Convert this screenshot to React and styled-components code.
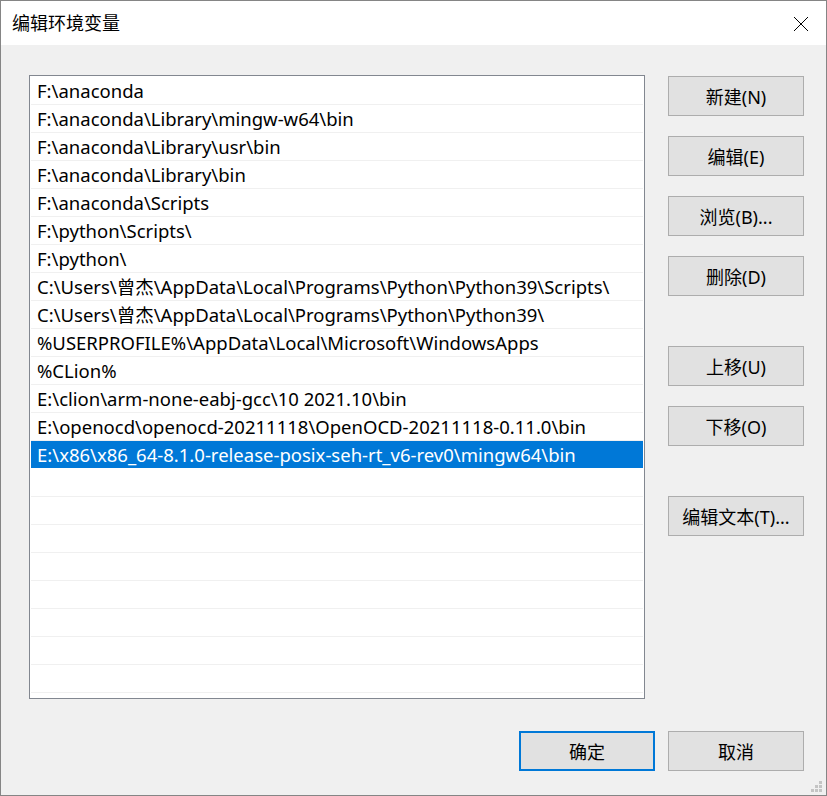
import React from 'react';
import styled, { createGlobalStyle } from 'styled-components';

const GlobalStyle = createGlobalStyle`
  html, body {
    margin: 0;
    padding: 0;
    background: #ffffff;
  }
  * {
    box-sizing: border-box;
  }
`;

const paths = [
  'F:\\anaconda',
  'F:\\anaconda\\Library\\mingw-w64\\bin',
  'F:\\anaconda\\Library\\usr\\bin',
  'F:\\anaconda\\Library\\bin',
  'F:\\anaconda\\Scripts',
  'F:\\python\\Scripts\\',
  'F:\\python\\',
  'C:\\Users\\曾杰\\AppData\\Local\\Programs\\Python\\Python39\\Scripts\\',
  'C:\\Users\\曾杰\\AppData\\Local\\Programs\\Python\\Python39\\',
  '%USERPROFILE%\\AppData\\Local\\Microsoft\\WindowsApps',
  '%CLion%',
  'E:\\clion\\arm-none-eabj-gcc\\10 2021.10\\bin',
  'E:\\openocd\\openocd-20211118\\OpenOCD-20211118-0.11.0\\bin',
  'E:\\x86\\x86_64-8.1.0-release-posix-seh-rt_v6-rev0\\mingw64\\bin',
];

const SELECTED = 13;
const EMPTY_ROWS = 9;

function App() {
  return (
    <>
      <GlobalStyle />
      <Window>
        <TitleBar>
          <Title>编辑环境变量</Title>
          <CloseButton aria-label="关闭">
            <svg width="16" height="16" viewBox="0 0 16 16">
              <path d="M1 1 L15 15 M15 1 L1 15" stroke="#000" strokeWidth="1" fill="none" />
            </svg>
          </CloseButton>
        </TitleBar>
        <Body>
          <Main>
            <ListBox>
              {paths.map((p, i) => (
                <Row key={p} $selected={i === SELECTED}>
                  {p}
                </Row>
              ))}
              {Array.from({ length: EMPTY_ROWS }).map((_, i) => (
                <Row key={'empty' + i} />
              ))}
            </ListBox>
            <SideButtons>
              <Button>新建(N)</Button>
              <Button>编辑(E)</Button>
              <Button>浏览(B)...</Button>
              <Button>删除(D)</Button>
              <Button $group>上移(U)</Button>
              <Button>下移(O)</Button>
              <Button $group>编辑文本(T)...</Button>
            </SideButtons>
          </Main>
          <Footer>
            <Button $primary>确定</Button>
            <Button>取消</Button>
          </Footer>
          <Grip>
            <svg width="12" height="12" viewBox="0 0 12 12">
              <rect x="8" y="0" width="3" height="3" fill="#c4c4c4" />
              <rect x="4" y="4" width="3" height="3" fill="#c4c4c4" />
              <rect x="8" y="4" width="3" height="3" fill="#c4c4c4" />
              <rect x="0" y="8" width="3" height="3" fill="#c4c4c4" />
              <rect x="4" y="8" width="3" height="3" fill="#c4c4c4" />
              <rect x="8" y="8" width="3" height="3" fill="#c4c4c4" />
            </svg>
          </Grip>
        </Body>
      </Window>
    </>
  );
}

export default App;

const font = `"Noto Sans", "Noto Sans CJK SC", sans-serif`;

const Window = styled.div`
  width: 827px;
  height: 796px;
  border: 1px solid #858585;
  display: flex;
  flex-direction: column;
  font-family: ${font};
  color: #000;
  overflow: hidden;
`;

const TitleBar = styled.div`
  height: 44px;
  flex: none;
  background: #ffffff;
  display: flex;
  align-items: center;
  justify-content: space-between;
  padding-left: 11px;
`;

const Title = styled.div`
  font-size: 18px;
  line-height: 1;
`;

const CloseButton = styled.div`
  width: 46px;
  height: 44px;
  display: flex;
  align-items: center;
  justify-content: center;
  margin-right: 2px;
  padding-top: 1px;
`;

const Body = styled.div`
  flex: 1;
  background: #f0f0f0;
  position: relative;
  padding: 30px 22px 0 28px;
  display: flex;
  flex-direction: column;
`;

const Main = styled.div`
  display: flex;
  gap: 23px;
`;

const ListBox = styled.div`
  width: 616px;
  height: 624px;
  border: 1px solid #828790;
  background: #ffffff;
  padding: 1px;
  overflow: hidden;
  display: flex;
  flex-direction: column;
`;

const Row = styled.div`
  flex: none;
  height: 28px;
  line-height: 27px;
  padding-left: 6px;
  font-size: 18.5px;
  white-space: nowrap;
  border-bottom: 1px solid ${(p) => (p.$selected ? '#ffffff' : '#f0f0f0')};
  background: ${(p) => (p.$selected ? '#0078d7' : 'transparent')};
  color: ${(p) => (p.$selected ? '#ffffff' : '#000000')};
`;

const SideButtons = styled.div`
  display: flex;
  flex-direction: column;
  gap: 20px;
  padding-top: 1px;
`;

const Button = styled.div`
  width: 136px;
  height: 40px;
  flex: none;
  margin-top: ${(p) => (p.$group ? '30px' : '0')};
  background: #e1e1e1;
  border: ${(p) => (p.$primary ? '2px solid #0078d7' : '1px solid #adadad')};
  display: flex;
  align-items: center;
  justify-content: center;
  font-size: 18px;
  white-space: nowrap;
`;

const Footer = styled.div`
  display: flex;
  justify-content: flex-end;
  gap: 13px;
  margin-top: 32px;
`;

const Grip = styled.div`
  position: absolute;
  right: 3px;
  bottom: 2px;
  line-height: 0;
`;
